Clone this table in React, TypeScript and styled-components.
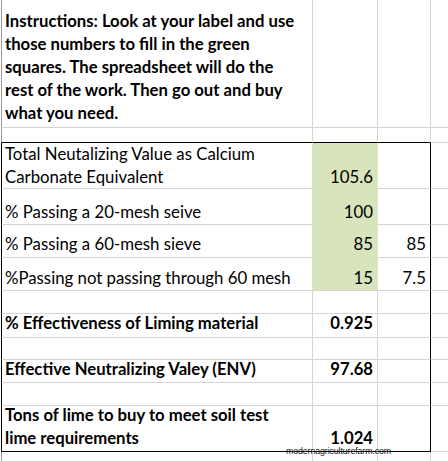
import React from "react";
import styled, { createGlobalStyle } from "styled-components";

const GRID = "#d4d4d4";
const EDGE = "#9a9a9a";
const GREEN = "#d8e4bc";
const INK = "#000000";

const GlobalStyle = createGlobalStyle`
  html, body {
    margin: 0;
    padding: 0;
    background: #ffffff;
  }
  body {
    font-family: Lato, "Open Sans", "Liberation Sans", sans-serif;
    color: ${INK};
    overflow: hidden;
  }
`;

interface CellDef {
  text?: React.ReactNode;
  right?: boolean;
  bold?: boolean;
  fill?: boolean;
}

interface RowDef {
  height: number;
  pad: number;
  boxed?: boolean;
  boxTop?: boolean;
  boxBottom?: boolean;
  cells: [CellDef, CellDef, CellDef];
}

const rows: RowDef[] = [
  {
    height: 128,
    pad: 2,
    cells: [
      {
        bold: true,
        text: (
          <>
            Instructions: Look at your label and use
            <br />
            those numbers to fill in the green
            <br />
            squares. The spreadsheet will do the
            <br />
            rest of the work. Then go out and buy
            <br />
            what you need.
          </>
        ),
      },
      {},
      {},
    ],
  },
  { height: 15, pad: 0, boxTop: true, cells: [{}, {}, {}] },
  {
    height: 46,
    pad: 0,
    boxed: true,
    cells: [
      {
        text: (
          <>
            Total Neutalizing Value as Calcium
            <br />
            Carbonate Equivalent
          </>
        ),
      },
      { text: "105.6", right: true, fill: true },
      {},
    ],
  },
  {
    height: 36,
    pad: 1,
    boxed: true,
    cells: [
      { text: "% Passing a 20-mesh seive" },
      { text: "100", right: true, fill: true },
      {},
    ],
  },
  {
    height: 33,
    pad: 2,
    boxed: true,
    cells: [
      { text: "% Passing a 60-mesh sieve" },
      { text: "85", right: true, fill: true },
      { text: "85", right: true },
    ],
  },
  {
    height: 33,
    pad: 1,
    boxed: true,
    cells: [
      { text: "%Passing not passing through 60 mesh" },
      { text: "15", right: true, fill: true },
      { text: "7.5", right: true },
    ],
  },
  { height: 23, pad: 0, boxed: true, cells: [{}, {}, {}] },
  {
    height: 24,
    pad: 2,
    boxed: true,
    cells: [
      { text: "% Effectiveness of Liming material", bold: true },
      { text: "0.925", right: true, bold: true },
      {},
    ],
  },
  { height: 22, pad: 0, boxed: true, cells: [{}, {}, {}] },
  {
    height: 23,
    pad: 1,
    boxed: true,
    cells: [
      { text: "Effective Neutralizing Valey (ENV)", bold: true },
      { text: "97.68", right: true, bold: true },
      {},
    ],
  },
  { height: 23, pad: 0, boxed: true, cells: [{}, {}, {}] },
  {
    height: 46,
    pad: 1,
    boxed: true,
    boxBottom: true,
    cells: [
      {
        bold: true,
        text: (
          <>
            Tons of lime to buy to meet soil test
            <br />
            lime requirements
          </>
        ),
      },
      { text: "1.024", right: true, bold: true },
      {},
    ],
  },
  { height: 40, pad: 0, cells: [{}, {}, {}] },
];

const Page = styled.div`
  position: relative;
  width: 448px;
  height: 461px;
  overflow: hidden;
`;

const Sheet = styled.div`
  display: grid;
  grid-template-columns: 312px 65px 53px 1fr;
  margin-left: 1px;
`;

const Cell = styled.div<{
  $h: number;
  $pad: number;
  $bl?: string;
  $br?: string;
  $bb: string;
  $fill?: boolean;
  $right?: boolean;
  $bold?: boolean;
}>`
  box-sizing: border-box;
  height: ${({ $h }) => $h}px;
  display: flex;
  flex-direction: column;
  justify-content: flex-end;
  align-items: ${({ $right }) => ($right ? "flex-end" : "flex-start")};
  padding: 0 ${({ $right }) => ($right ? 4 : 0)}px ${({ $pad }) => $pad}px
    ${({ $right }) => ($right ? 0 : 3)}px;
  border-left: ${({ $bl }) => ($bl ? `1px solid ${$bl}` : "none")};
  border-right: ${({ $br }) => ($br ? `1px solid ${$br}` : "none")};
  border-bottom: 1px solid ${({ $bb }) => $bb};
  background: ${({ $fill }) => ($fill ? GREEN : "transparent")};
  font-size: ${({ $bold }) => ($bold ? "16.7px" : "16.8px")};
  font-weight: ${({ $bold }) => ($bold ? 700 : 400)};
  line-height: 23px;
  white-space: nowrap;
`;

const Watermark = styled.div`
  position: absolute;
  left: 286px;
  top: 446px;
  font-family: "Liberation Sans", Arial, sans-serif;
  font-size: 8.8px;
  line-height: 11px;
  color: #111111;
  letter-spacing: -0.1px;
`;

export default function App() {
  return (
    <Page>
      <GlobalStyle />
      <Sheet>
        {rows.map((row, r) => {
          const [a, b, c] = row.cells;
          const greenRow = !!b.fill;
          const boxEdge = row.boxTop || row.boxBottom;
          const bottomABC = boxEdge ? INK : GRID;
          const bottomB =
            boxEdge ? INK : greenRow && rows[r + 1]?.cells[1].fill ? GREEN : GRID;
          return (
            <React.Fragment key={r}>
              <Cell
                $h={row.height}
                $pad={row.pad}
                $bl={row.boxed ? INK : EDGE}
                $br={greenRow ? GREEN : GRID}
                $bb={bottomABC}
                $bold={a.bold}
              >
                {a.text}
              </Cell>
              <Cell
                $h={row.height}
                $pad={row.pad}
                $br={greenRow ? GREEN : GRID}
                $bb={bottomB}
                $fill={b.fill}
                $right
                $bold={b.bold}
              >
                {b.text}
              </Cell>
              <Cell
                $h={row.height}
                $pad={row.pad}
                $br={row.boxed ? INK : GRID}
                $bb={bottomABC}
                $right
                $bold={c.bold}
              >
                {c.text}
              </Cell>
              <Cell $h={row.height} $pad={0} $bb={GRID} />
            </React.Fragment>
          );
        })}
      </Sheet>
      <Watermark>modernagriculturefarm.com</Watermark>
    </Page>
  );
}
